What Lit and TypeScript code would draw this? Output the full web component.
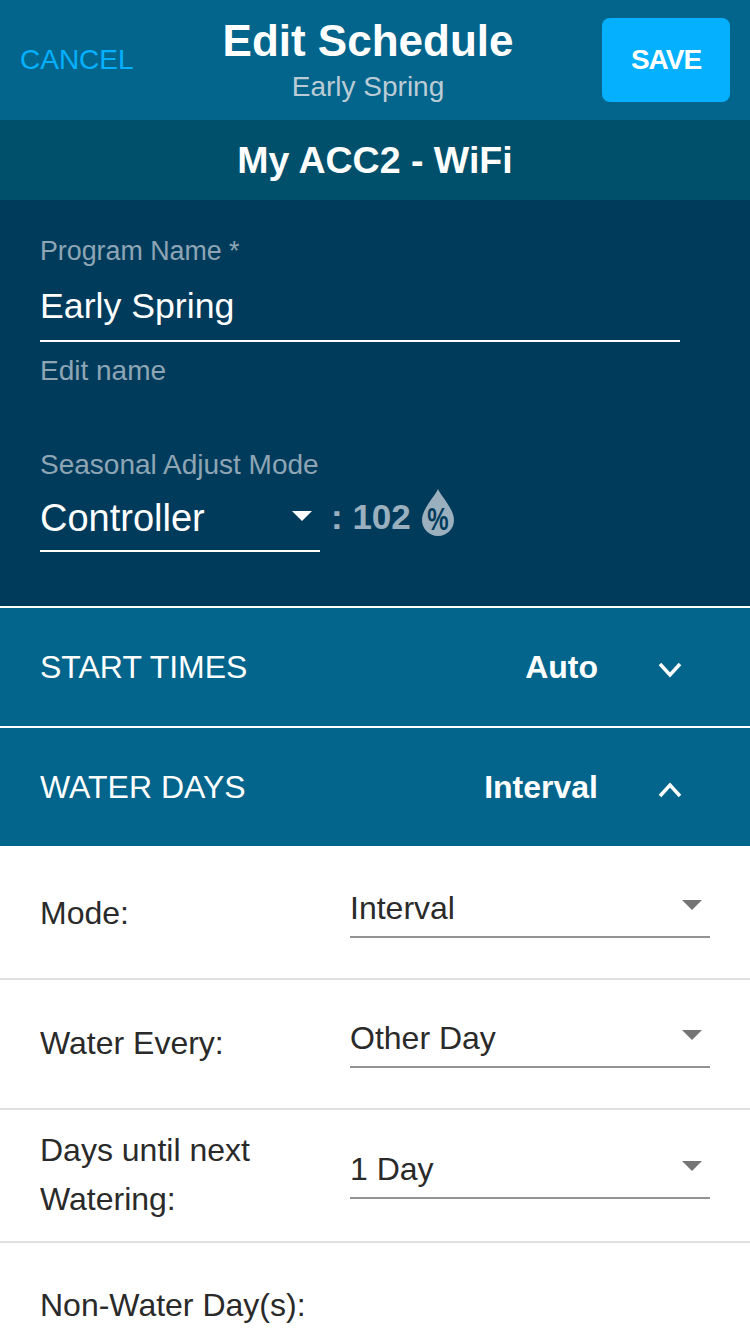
import { LitElement, html, css, svg } from "lit";
import { customElement } from "lit/decorators.js";

@customElement("app-root")
export class AppRoot extends LitElement {
  static styles = css`
    :host { display: block; width: 750px; height: 1334px; overflow: hidden; background: #fff; font-family: "Liberation Sans", Arial, sans-serif; color: #222; }
    .header { height: 120px; box-sizing: border-box; background: #03658c; display: grid; grid-template-columns: 203px minmax(0, 1fr) 217px; align-items: start; padding: 18px 20px 0 20px; }
    .cancel { font-size: 28px; line-height: 32px; color: #05b1ff; margin-top: 26px; }
    .titles { display: flex; flex-direction: column; align-items: center; white-space: nowrap; }
    .title { font-size: 44px; line-height: 46px; font-weight: 700; color: #fff; }
    .sub { font-size: 28px; line-height: 32px; color: #bcccd6; margin-top: 7px; }
    .save { justify-self: end; width: 128px; height: 84px; border-radius: 8px; background: #05b1ff; color: #fff; font-size: 28px; letter-spacing: -1px; font-weight: 700; display: flex; align-items: center; justify-content: center; }
    .device { height: 80px; background: #00506b; color: #fff; font-size: 37.5px; font-weight: 700; display: flex; align-items: center; justify-content: center; }
    .form { height: 406px; box-sizing: border-box; background: #003b5c; padding: 36px 40px 0; display: flex; flex-direction: column; }
    .flabel { font-size: 28px; line-height: 30px; color: #8ea5b4; }
    .pname { font-size: 26.8px; }
    .name { width: 640px; height: 66px; box-sizing: border-box; margin-top: 10px; border-bottom: 2px solid #fff; color: #fff; font-size: 35.7px; line-height: 40px; padding-top: 10px; }
    .hint { margin-top: 14px; }
    .season { margin-top: 64px; }
    .adj { display: flex; align-items: flex-start; margin-top: 3px; }
    .sel { width: 280px; height: 69px; box-sizing: border-box; border-bottom: 2px solid #fff; color: #fff; font-size: 38px; line-height: 40px; padding-top: 15px; position: relative; }
    .sel svg { position: absolute; right: 8px; top: 28px; }
    .pct { display: flex; align-items: center; margin-left: 11px; height: 68px; color: #9bb0be; font-size: 35px; font-weight: 700; gap: 11px; }
    .drop { margin-top: -9px; }
    .bar { background: #03658c; height: 118px; box-sizing: border-box; padding: 0 40px; display: flex; align-items: center; color: #fff; font-size: 32px; }
    .line { height: 2px; background: #fff; }
    .bar .t { flex: 1; }
    .bar b { font-weight: 700; font-size: 32px; }
    .bar svg { margin-left: 60px; margin-right: 28px; margin-top: 6px; }
    .row { display: flex; align-items: center; padding: 0 40px; box-sizing: border-box; border-bottom: 2px solid #e0e0e0; font-size: 32px; }
    .r1 { height: 134px; }
    .r2 { height: 130px; padding-bottom: 4px; }
    .r3 { height: 133px; padding-bottom: 4px; }
    .r4 { height: 122px; border: 0; }
    .lab { width: 310px; line-height: 49px; color: #2a2a2a; margin-top: 2px; }
    .val { width: 360px; height: 52px; box-sizing: border-box; border-bottom: 2px solid #939393; position: relative; line-height: 44px; color: #2a2a2a; }
    .r3 .val { margin-top: -2px; }
    .val svg { position: absolute; right: 8px; top: 14px; }
  `;

  private tri(fill: string, w: number, h: number) {
    return html`<svg width=${w} height=${h} viewBox="0 0 20 10">${svg`<path d="M0 0H20L10 10Z" fill=${fill}></path>`}</svg>`;
  }

  private row(cls: string, label: unknown, value: string) {
    return html`<div class="row ${cls}"><div class="lab">${label}</div><div class="val">${value}${this.tri("#757575", 20, 10)}</div></div>`;
  }

  render() {
    return html`
      <div class="header">
        <div class="cancel">CANCEL</div>
        <div class="titles"><div class="title">Edit Schedule</div><div class="sub">Early Spring</div></div>
        <div class="save">SAVE</div>
      </div>
      <div class="device">My ACC2 - WiFi</div>
      <div class="form">
        <div class="flabel pname">Program Name *</div>
        <div class="name">Early Spring</div>
        <div class="flabel hint">Edit name</div>
        <div class="flabel season">Seasonal Adjust Mode</div>
        <div class="adj">
          <div class="sel">Controller${this.tri("#fff", 20, 10)}</div>
          <div class="pct">: 102
            <svg class="drop" width="32" height="47" viewBox="0 0 32 47">
              <path d="M16 0C19 7 32 20 32 31A16 16 0 0 1 0 31C0 20 13 7 16 0Z" fill="#9bb0be"></path>
              <text transform="translate(16 41) scale(1 1.3)" text-anchor="middle" font-family="Liberation Sans" font-weight="700" font-size="24" fill="#003b5c">%</text>
            </svg>
          </div>
        </div>
      </div>
      <div class="line"></div>
      <div class="bar"><span class="t">START TIMES</span><b>Auto</b>
        <svg width="24" height="16" viewBox="0 0 24 16"><path d="M2 2L12 13L22 2" fill="none" stroke="#fff" stroke-width="3.5"></path></svg></div>
      <div class="line"></div>
      <div class="bar"><span class="t">WATER DAYS</span><b>Interval</b>
        <svg width="24" height="16" viewBox="0 0 24 16"><path d="M2 14L12 3L22 14" fill="none" stroke="#fff" stroke-width="3.5"></path></svg></div>
      ${this.row("r1", "Mode:", "Interval")}
      ${this.row("r2", "Water Every:", "Other Day")}
      ${this.row("r3", html`Days until next<br />Watering:`, "1 Day")}
      <div class="row r4"><div class="lab">Non-Water Day(s):</div></div>
    `;
  }
}
